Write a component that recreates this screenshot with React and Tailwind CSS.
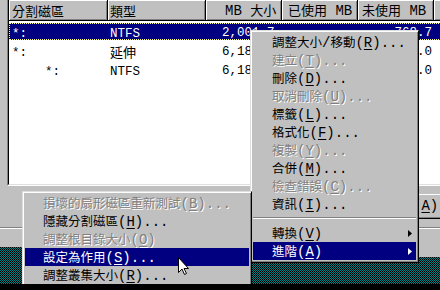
import React from "react";

const CJK = "font-['Noto_Sans_CJK_TC','Noto_Sans_CJK_JP',sans-serif]";
const MENU_ASCII = "font-['Liberation_Mono','DejaVu_Sans_Mono',monospace] text-[14px]";
const LIST_ASCII = "font-['Liberation_Mono','DejaVu_Sans_Mono',monospace] text-[12.5px]";
const HEAD_ASCII = "font-['Liberation_Mono','DejaVu_Sans_Mono',monospace] text-[14px]";
const TEAL =
  "[background-image:repeating-conic-gradient(#008080_0_25%,#000000_0_50%)] [background-size:2px_2px]";

function Mixed({ s, a }) {
  const parts = s.split(/([\x00-\x7f]+)/);
  return parts.map((p, i) =>
    p === "" ? null : i % 2 === 1 ? (
      <span key={i} className={a}>
        {p}
      </span>
    ) : (
      <span key={i}>{p}</span>
    )
  );
}

function MenuItem({ label, k, suffix = "...", disabled, active, arrow, pad }) {
  const tone = active
    ? "bg-[#000080] text-white"
    : disabled
    ? "text-[#808080] [text-shadow:1px_1px_0_#ffffff]"
    : "text-black";
  return (
    <div className={`flex h-[18px] items-center ${pad} ${tone}`}>
      <span className="whitespace-pre leading-[18px]">
        <Mixed s={label} a={MENU_ASCII} />
        <span className={MENU_ASCII}>
          (<span className="underline decoration-1 underline-offset-2">{k}</span>){suffix}
        </span>
      </span>
      {arrow && (
        <svg width="4" height="7" viewBox="0 0 4 7" className="ml-auto mr-[4px]">
          <path d="M0 0 L4 3.5 L0 7 Z" fill="currentColor" />
        </svg>
      )}
    </div>
  );
}

function H({ w, pad, children }) {
  return (
    <div
      className={`${w} ${pad} h-full shrink-0 flex items-center overflow-hidden border-r border-b border-black bg-[#c0c0c0] shadow-[inset_1px_1px_0_#ffffff,inset_-1px_-1px_0_#808080] whitespace-pre leading-none`}
    >
      <span className="whitespace-pre">{children}</span>
    </div>
  );
}

function Row({ sel, indent, name, type, size, free }) {
  return (
    <div className="h-[19px]">
      <div
        className={`flex h-[17px] items-center pt-[3px] whitespace-pre ${
          sel
            ? "bg-[#000080] text-white outline outline-1 outline-dotted outline-[#ffff99] -outline-offset-1"
            : "text-black"
        }`}
      >
        <div className={`w-[99px] shrink-0 ${indent ? "pl-[36px]" : "pl-[3px]"}`}>
          <Mixed s={name} a={LIST_ASCII} />
        </div>
        <div className="w-[98px] shrink-0 pl-[2px]">
          <Mixed s={type} a={LIST_ASCII} />
        </div>
        <div className={`w-[76px] shrink-0 pl-[16px] ${LIST_ASCII}`}>{size}</div>
        <div className="w-[76px] shrink-0" />
        <div className={`w-[76px] shrink-0 text-right pr-[2px] ${LIST_ASCII}`}>{free}</div>
      </div>
    </div>
  );
}

export default function App() {
  return (
    <div className={`w-[440px] h-[290px] overflow-hidden bg-black flex flex-col ${CJK} text-[13px]`}>
      <div className="relative h-[284px] shrink-0 overflow-hidden bg-[#c0c0c0] flex flex-col">
        {/* list view */}
        <div className="h-[186px] shrink-0 pl-[7px]">
          <div className="h-full w-[470px] border-l border-b border-l-[#808080] border-b-white">
            <div className="h-full border-l border-b border-l-black border-b-[#dfdfdf] bg-white flex flex-col">
              <div className="h-[21px] shrink-0 flex text-black">
                <H w="w-[99px]" pad="pl-[3px]">分割磁區</H>
                <H w="w-[98px]" pad="pl-[2px]">類型</H>
                <H w="w-[76px]" pad="pl-[19px]">
                  <Mixed s="MB 大小" a={HEAD_ASCII} />
                </H>
                <H w="w-[76px]" pad="pl-[6px]">
                  <Mixed s="已使用 MB" a={HEAD_ASCII} />
                </H>
                <H w="w-[76px]" pad="pl-[4px]">
                  <Mixed s="未使用 MB" a={HEAD_ASCII} />
                </H>
                <H w="flex-1" pad="pl-[4px]"> </H>
              </div>
              <div className="pt-[2px] text-[13px]">
                <Row sel name="*:" type="NTFS" size="2,001.7" free="768.7" />
                <Row name="*:" type="延伸" size="6,188.3" free="4,211.0" />
                <Row indent name="*:" type="NTFS" size="6,188.3" free="4,211.0" />
              </div>
            </div>
          </div>
        </div>

        {/* lower dialog area + desktop */}
        <div className="flex flex-1">
          <div className="w-[22px] flex flex-col">
            <div className="h-[61px] shrink-0">
              <div className="h-[42px] border-b border-[#808080]" />
              <div className="h-px bg-white" />
            </div>
            <div className={`flex-1 ${TEAL}`} />
          </div>
          <div className="flex-1 flex flex-col">
            <div className="h-[71px] shrink-0 flex flex-col">
              <div className="h-[33px] shrink-0 flex justify-end pt-[8px]">
                <div className="w-[36px] h-[25px] flex items-center pl-[8px] border-t border-l border-t-white border-l-white border-b border-b-black shadow-[inset_0_-1px_0_#808080] text-black whitespace-pre">
                  <span className={MENU_ASCII}>
                    (<span className="underline decoration-1 underline-offset-2">A</span>)
                  </span>
                </div>
              </div>
              <div className="h-[9px] border-b border-[#808080]" />
              <div className="h-px bg-white" />
            </div>
            <div className={`flex-1 ${TEAL}`} />
          </div>
        </div>

        {/* main context menu */}
        <div className="absolute left-[250px] top-[30px] w-[169px] border border-t-[#dfdfdf] border-l-[#dfdfdf] border-r-black border-b-black bg-[#c0c0c0] p-[2px] shadow-[inset_1px_1px_0_#ffffff,inset_-1px_-1px_0_#808080] text-[12.5px]">
          <MenuItem pad="pl-[19px]" label="調整大小/移動" k="R" />
          <MenuItem pad="pl-[19px]" label="建立" k="T" disabled />
          <MenuItem pad="pl-[19px]" label="刪除" k="D" />
          <MenuItem pad="pl-[19px]" label="取消刪除" k="U" disabled />
          <MenuItem pad="pl-[19px]" label="標籤" k="L" />
          <MenuItem pad="pl-[19px]" label="格式化" k="F" />
          <MenuItem pad="pl-[19px]" label="複製" k="Y" disabled />
          <MenuItem pad="pl-[19px]" label="合併" k="M" />
          <MenuItem pad="pl-[19px]" label="檢查錯誤" k="C" disabled />
          <MenuItem pad="pl-[19px]" label="資訊" k="I" />
          <div className="h-[11px] pt-[4px]">
            <div className="border-t border-[#808080]" />
            <div className="h-px bg-white" />
          </div>
          <MenuItem pad="pl-[19px]" label="轉換" k="V" suffix="" arrow />
          <MenuItem pad="pl-[19px]" label="進階" k="A" suffix="" arrow active />
        </div>

        {/* sub menu */}
        <div className="absolute left-[22px] top-[191px] w-[230px] h-[110px] border border-t-[#dfdfdf] border-l-[#dfdfdf] border-r-black border-b-black bg-[#c0c0c0] p-[2px] shadow-[inset_1px_1px_0_#ffffff,inset_-1px_-1px_0_#808080] text-[12.5px]">
          <MenuItem pad="pl-[18px]" label="損壞的扇形磁區重新測試" k="B" disabled />
          <MenuItem pad="pl-[18px]" label="隱藏分割磁區" k="H" />
          <MenuItem pad="pl-[18px]" label="調整根目錄大小" k="O" suffix="" disabled />
          <MenuItem pad="pl-[18px]" label="設定為作用" k="S" active />
          <MenuItem pad="pl-[18px]" label="調整叢集大小" k="R" />
        </div>

        {/* mouse cursor */}
        <svg
          className="absolute left-[178px] top-[257px]"
          width="12"
          height="19"
          viewBox="0 0 12 19"
        >
          <path
            d="M0.5 0.5 V15.5 L4 12 L6.5 17.5 L8.5 16.5 L6 11.5 H10.5 Z"
            fill="#ffffff"
            stroke="#000000"
            strokeWidth="1"
            strokeLinejoin="miter"
          />
        </svg>
      </div>
    </div>
  );
}
